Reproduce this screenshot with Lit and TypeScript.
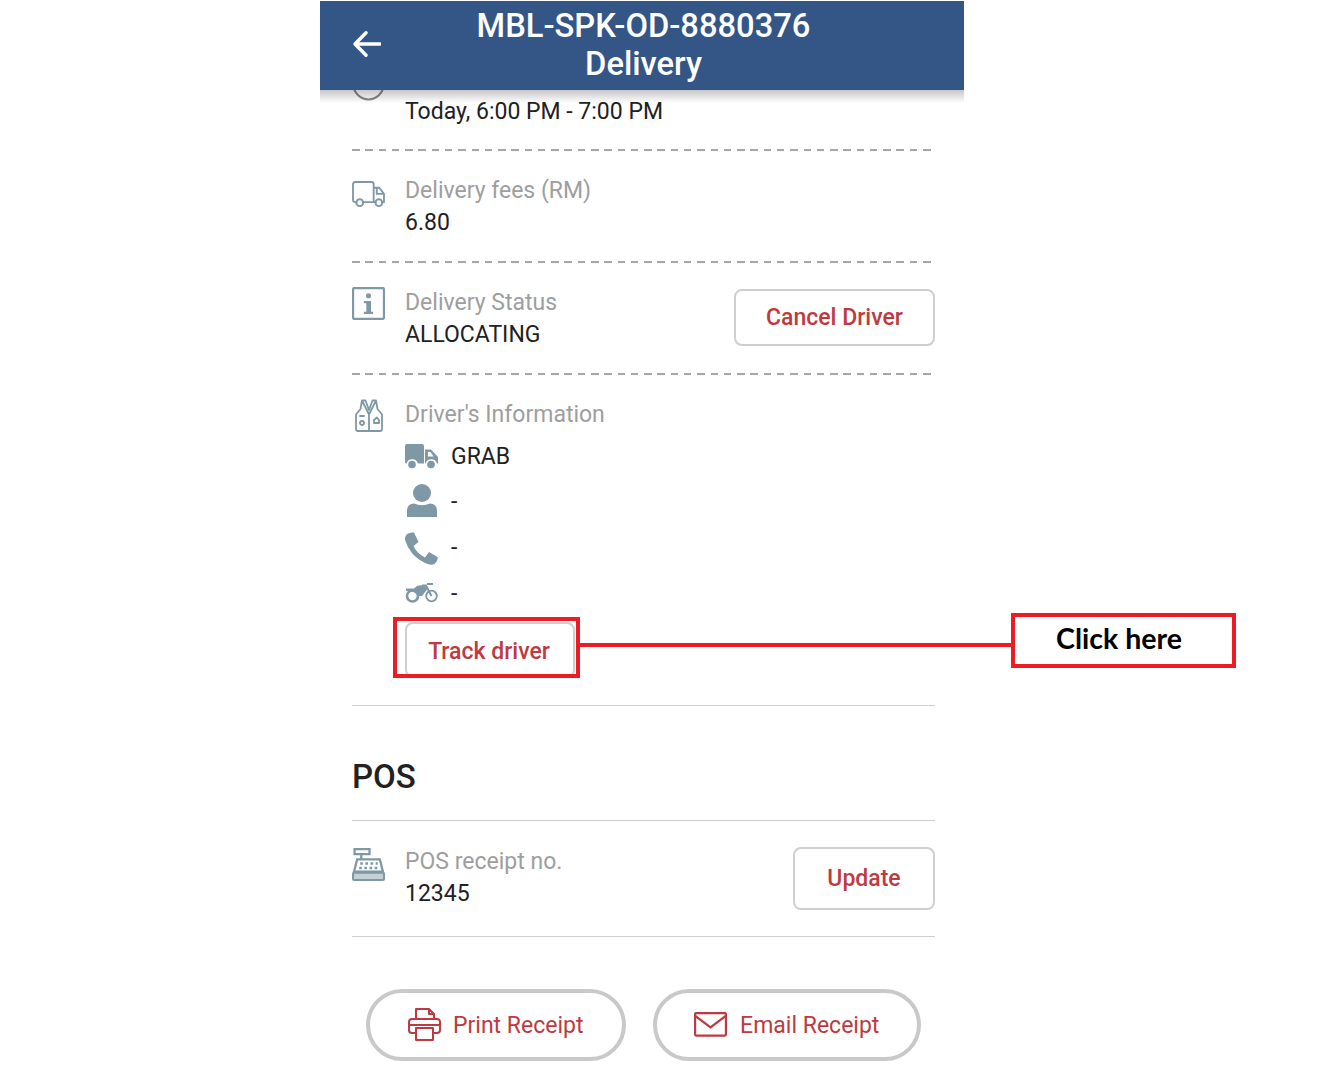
import { LitElement, html, css, svg } from "lit";
import { customElement } from "lit/decorators.js";

const stroke = (w: number, body: unknown, vb = "0 0 32 32") => html`<svg viewBox=${vb} fill="none" stroke="currentColor" stroke-width=${w} stroke-linecap="round" stroke-linejoin="round">${body}</svg>`;

const icons = {
  back: stroke(3.4, svg`<path d="M27 13H2.500M13 1.800 2 13 13 24.200"/>`, "0 0 28 26"),
  clock: stroke(2, svg`<circle cx="16" cy="16" r="14.500"/>`),
  truckLine: stroke(1.8, svg`<path d="M4.500 20.500H3Q1 20.500 1 18.500V3Q1 1 3 1H19Q21 1 21 3V20.500H10.500M21 6.500H26.500L31 12.500V20.500H29M21 20.500H23M24 7V12.500H31"/><circle cx="7.500" cy="21" r="3.300"/><circle cx="26" cy="21" r="3.300"/>`, "0 0 32 26"),
  info: html`<svg viewBox="0 0 32 32"><rect x="1" y="1" width="30" height="30" rx="1.500" fill="none" stroke="currentColor" stroke-width="2.200"/><path fill="currentColor" d="M13.500 8.500a2.500 2.500 0 1 0 5 0 2.500 2.500 0 1 0-5 0ZM11.500 13.500h7v10.500h2v2.200h-9v-2.200h2.400v-8.300h-2.400Z"/></svg>`,
  vest: stroke(1.8, svg`<path d="M7 1.500H10.500L14 11 17.500 1.500H21L22.500 10 27 15.500V30Q27 32 25 32H3Q1 32 1 30V15.500L5.500 10ZM7 1.500 14 15.500 21 1.500M14 15.500V32"/><circle cx="7" cy="24" r="2"/><path d="M5 17H9M19 21 22 18.500 24 21V24H19Z"/>`, "0 0 28 33"),
  truck: html`<svg viewBox="0 0 33 25" fill="currentColor"><path d="M2 0H17Q19 0 19 2V19.500H13A6 6 0 0 0 1.500 19.500Q0 19.500 0 18V2Q0 0 2 0ZM20 5.500H26L33 13V19.500H32A6 6 0 0 0 20.500 19.500H20Z"/><circle cx="7" cy="20.500" r="3.800"/><circle cx="26" cy="20.500" r="3.800"/><path fill="#fff" d="M23 8H25.500L28.500 12.500H23Z"/></svg>`,
  person: html`<svg viewBox="0 0 30 33" fill="currentColor"><circle cx="15" cy="9" r="9"/><path d="M0 33V27Q0 20 7 19.500 15 23 23 19.500 30 20 30 27V33Z"/></svg>`,
  phone: html`<svg viewBox="0 0 33 33" fill="currentColor"><path d="M2 2Q5 0 9 .5L13.500 10 8.500 14Q12 21.500 20 25.500L24 20 32.500 25Q33.500 29 29.500 32 26 34 20 31 5 24 0 8 0 4 2 2Z"/></svg>`,
  bike: html`<svg viewBox="0 0 33 21" fill="none" stroke="currentColor"><circle cx="7.500" cy="14" r="5.500" stroke-width="2.600"/><circle cx="26.500" cy="14" r="5.300" stroke-width="1.800"/><path stroke-width="2" d="M26.500 14 21 3.500H17"/><path fill="currentColor" stroke="none" d="M1 6.500H9L12 4Q16 2.500 20 4L22.500 7 17 14H12.500Q11 9 1 9ZM22 1H28V3H22Z"/></svg>`,
  register: html`<svg viewBox="0 0 32 32"><path fill="none" stroke="currentColor" stroke-width="2.200" d="M2.500 1H17V6H2.500ZM9 6V10M5 11H27L30 23H2Z"/><rect x="1" y="24" width="30" height="7" rx="1" fill="#c3d0d6" stroke="currentColor" stroke-width="2"/><path stroke="currentColor" stroke-width="2.400" stroke-dasharray="2.500 2.500" d="M8 15H25M7 19.500H26"/></svg>`,
  printer: stroke(2, svg`<path d="M8 11V1H21L26 6V11M21 1V6H26M8 25H4Q1 25 1 22V14Q1 11 4 11H29Q32 11 32 14V22Q32 25 29 25H25M8 20H25V32H8ZM1 17H32"/>`, "0 0 33 33"),
  mail: stroke(2.200, svg`<rect x="1" y="1" width="30" height="22" rx="1.500"/><path d="M1.500 4 16 15 30.500 4"/>`, "0 0 32 24"),
};

@customElement("app-root")
export class AppRoot extends LitElement {
  static styles = css`
    :host { display: block; position: relative; height: 1080px; background: #fff; overflow: hidden;
      font-family: Roboto, sans-serif; color: #212121; }
    svg { display: block; }
    .phone { width: 644px; margin-left: 320px; padding-top: 1px; }
    .bar { position: relative; z-index: 2; box-sizing: border-box; height: 89px; background: #335686; color: #fff;
      display: flex; align-items: center; padding: 0 0 3px 33px; }
    .bar::after { content: ""; position: absolute; left: 0; right: 0; top: 100%; height: 13px;
      background: linear-gradient(rgba(0,0,0,.22), rgba(0,0,0,0)); }
    .back { width: 28px; height: 26px; flex: none; }
    .titles { flex: 1; margin-left: -58px; padding-top: 2px; text-align: center; font-size: 32.700px; font-weight: 500; line-height: 38px; }
    .content { padding: 0 29px 0 32px; }
    .row { display: flex; align-items: center; }
    .first { padding: 6px 0 21px; }
    .section { padding: 24px 0 22px; }
    .ico { flex: none; width: 53px; align-self: flex-start; color: #7f98a5; }
    .ico svg { width: 33px; }
    .ico.fees { padding-top: 6px; }
    .ico.status { padding-top: 0; }
    .ico.vest { box-sizing: border-box; padding-left: 3px; }
    .ico.vest svg { width: 28px; }
    .ico.reg { padding-top: 2px; }
    .clock { margin-top: -28px; height: 32px; color: #888; position: relative; }
    .grow { flex: 1; }
    .label { font-size: 23px; line-height: 32px; color: #9e9e9e; }
    .driver-label { margin-bottom: 3px; }
    .val { font-size: 23px; line-height: 32px; color: #212121; }
    .dash { height: 2px; background: repeating-linear-gradient(90deg, #a6a6a6 0 7.500px, transparent 7.500px 13.280px); }
    .line { height: 1px; background: #cfcfcf; }
    .btn { box-sizing: border-box; border: 2px solid #cfcfcf; border-radius: 8px; background: #fff; color: #be3a40;
      font-size: 23px; font-weight: 500; display: flex; align-items: center; justify-content: center; }
    .cancel { width: 201px; height: 57px; margin-bottom: 4px; }
    .update { width: 142px; height: 63px; margin-top: 1px; padding-top: 1px; }
    .info-row { display: flex; align-items: center; height: 45.670px; font-size: 23px; color: #212121; }
    .info-row span { line-height: 32px; }
    .info-ico { width: 46px; flex: none; color: #7f98a5; }
    .info-ico svg { width: 33px; }
    .info-ico.person { box-sizing: border-box; padding: 0 0 3px 2px; }
    .info-ico.person svg { width: 30px; }
    .info-ico.moto { margin-top: -3px; }
    .track { width: 170px; height: 56px; margin-top: 5.330px; margin-bottom: 27px; padding: 3px 2px 0 0; }
    .driver { padding-top: 24px; }
    .pos-head { margin: 0; font-size: 33px; font-weight: 500; line-height: 40px; padding: 51px 0 23px; color: #212121; }
    .pos-row { padding: 25px 0 26px; }
    .actions { display: flex; padding: 52px 14px 0; gap: 27px; }
    .pill { box-sizing: border-box; height: 72px; border: 4px solid #c9c9c9; border-radius: 36px; background: #fff; color: #be3a40;
      font-size: 23px; display: flex; align-items: center; justify-content: center; gap: 13px; }
    .pill.print { width: 260px; gap: 12px; }
    .pill.email { width: 269px; }
    .pill svg { flex: none; }
    .printer { width: 33px; height: 33px; }
    .mail { width: 33px; height: 25px; }
    .pill-text { padding-top: 1px; }
    .mark { position: absolute; box-sizing: border-box; border: 4px solid #ed1c24; z-index: 3; }
    .mark.track-box { left: 393px; top: 617px; width: 187px; height: 61px; }
    .mark.note { left: 1011px; top: 613px; width: 225px; height: 55px; background: #fff; display: flex; justify-content: center;
      padding: 3px 9px 0 0; font: 700 28.500px/36px Lato, sans-serif; color: #000; }
    .connector { position: absolute; left: 580px; top: 643px; width: 438px; height: 4px; background: #ed1c24; z-index: 3; }
  `;

  render() {
    return html`
      <div class="phone">
        <header class="bar">
          <div class="back">${icons.back}</div>
          <div class="titles">MBL-SPK-OD-8880376<br />Delivery</div>
        </header>
        <main class="content">
          <div class="row first">
            <div class="ico clock">${icons.clock}</div>
            <div class="val">Today, 6:00 PM - 7:00 PM</div>
          </div>
          <div class="dash"></div>
          <section class="row section">
            <div class="ico fees">${icons.truckLine}</div>
            <div class="grow"><div class="label">Delivery fees (RM)</div><div class="val">6.80</div></div>
          </section>
          <div class="dash"></div>
          <section class="row section">
            <div class="ico status">${icons.info}</div>
            <div class="grow"><div class="label">Delivery Status</div><div class="val">ALLOCATING</div></div>
            <div class="btn cancel">Cancel Driver</div>
          </section>
          <div class="dash"></div>
          <section class="row driver">
            <div class="ico vest">${icons.vest}</div>
            <div class="grow">
              <div class="label driver-label">Driver's Information</div>
              <div class="info-row"><div class="info-ico">${icons.truck}</div><span>GRAB</span></div>
              <div class="info-row"><div class="info-ico person">${icons.person}</div><span>-</span></div>
              <div class="info-row"><div class="info-ico">${icons.phone}</div><span>-</span></div>
              <div class="info-row"><div class="info-ico moto">${icons.bike}</div><span>-</span></div>
              <div class="btn track">Track driver</div>
            </div>
          </section>
          <div class="line"></div>
          <h2 class="pos-head">POS</h2>
          <div class="line"></div>
          <section class="row pos-row">
            <div class="ico reg">${icons.register}</div>
            <div class="grow"><div class="label">POS receipt no.</div><div class="val">12345</div></div>
            <div class="btn update">Update</div>
          </section>
          <div class="line"></div>
          <div class="actions">
            <div class="pill print"><div class="printer">${icons.printer}</div><span class="pill-text">Print Receipt</span></div>
            <div class="pill email"><div class="mail">${icons.mail}</div><span class="pill-text">Email Receipt</span></div>
          </div>
        </main>
      </div>
      <div class="mark track-box"></div>
      <div class="connector"></div>
      <div class="mark note">Click here</div>
    `;
  }
}
